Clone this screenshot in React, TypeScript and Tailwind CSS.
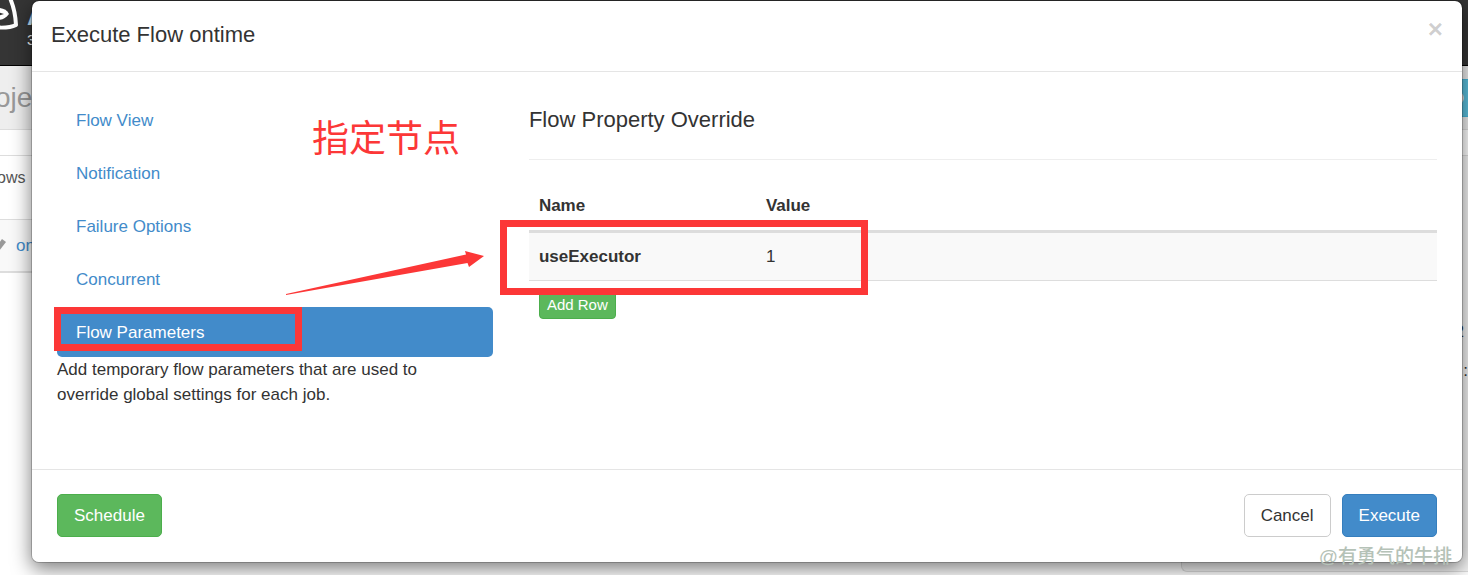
import React, { useState } from "react";

const tabs = [
  "Flow View",
  "Notification",
  "Failure Options",
  "Concurrent",
  "Flow Parameters",
];

const Logo = () => (
  <svg width="24" height="66" viewBox="0 0 24 66" fill="none" aria-hidden="true">
    <path
      d="M10 -2C13 5 15.500 14 16 25C12 27 6 28 -3 27.500"
      stroke="#fff"
      strokeWidth="4"
      strokeLinejoin="round"
    />
    <path d="M-2 8C3 8 7 10 9 14C6 18 2 20 -2 20Z" fill="#fff" />
    <path d="M-2 12L4 14L-2 16Z" fill="#333" />
  </svg>
);

const Background = () => (
  <div className="flex min-h-screen flex-col">
    <div className="flex h-[66px] border-b border-black bg-[#353535]">
      <Logo />
      <div className="pl-[3px]">
        <p className="text-[26px] leading-8 font-bold text-[#c4e2f5]">A</p>
        <p className="text-[15px] leading-4 text-white">3</p>
      </div>
    </div>
    <div className="flex h-16 items-center justify-between border-b border-[#ddd] bg-[#eee]">
      <p className="-ml-[5px] text-[28px] text-[#999]">oje</p>
      <div className="flex h-[38px] w-8 items-center justify-end border-y border-[#46b8da] bg-[#5bc0de] pr-1">
        <div className="size-3 rounded-full bg-[#ddd]" />
      </div>
    </div>
    <div className="flex flex-1 justify-between pt-[25px]">
      <div className="w-96">
        <div className="flex h-[65px] items-start border-y border-[#ddd] pt-[10px]">
          <p className="-ml-[3px] text-[16px] text-[#555]">ows</p>
        </div>
        <div className="flex h-[53px] items-center border-b-2 border-[#ddd] bg-[#f9f9f9]">
          <svg width="16" height="16" viewBox="0 0 16 16" aria-hidden="true">
            <path d="M-3 8L2 1L6 4L-1 13Z" fill="#999" />
          </svg>
          <a href="#flow" className="text-[17px] text-[#428bca]">on</a>
        </div>
      </div>
      <div className="mb-[3px] w-[287px] rounded-l-md border-y border-l border-[#ddd] bg-[#f5f5f5] pt-[163px] text-right text-[17px] leading-[25px]">
        <p className="pr-1">2</p>
        <p className="pt-[14px]">:</p>
      </div>
    </div>
  </div>
);

const Marks = () => (
  <div className="pointer-events-none absolute inset-0 z-20">
    <p className="absolute top-[114px] left-[312px] text-[37px] leading-[52px] text-[#fc3737]">
      指定节点
    </p>
    <svg
      className="absolute top-[250px] left-[286px]"
      width="200"
      height="46"
      viewBox="0 0 200 46"
      aria-hidden="true"
    >
      <path d="M0 44L180 4.500L179 1L198 6L183 17L181.500 13L0 45Z" fill="#fc3737" />
    </svg>
    <div className="absolute top-[307px] left-[54px] h-11 w-[248px] border-[7px] border-[#fc3737]" />
    <div className="absolute top-[220px] left-[500px] h-[75px] w-[368px] border-[7px] border-[#fc3737]" />
    <p className="absolute right-4 bottom-1 text-[19px] leading-7 font-medium text-[#b5c2b7]">
      @有勇气的牛排
    </p>
  </div>
);

export default function App() {
  const [active, setActive] = useState("Flow Parameters");

  return (
    <div className="relative min-h-screen overflow-hidden bg-white font-['Liberation_Sans','Noto_Sans_CJK_SC',sans-serif] text-[#333]">
      <Background />
      <div className="absolute inset-0 z-10 pr-[5px] pl-[31px]">
        <div
          role="dialog"
          aria-labelledby="title"
          className="rounded-lg border border-black/20 bg-white bg-clip-padding text-[17px] leading-[25px] shadow-[0_6px_19px_rgba(0,0,0,0.5)]"
        >
          <div className="flex h-[71px] items-start justify-between border-b border-[#e5e5e5] px-[19px] pt-4">
            <h4 id="title" className="pt-[5px] text-[22px]">
              Execute Flow ontime
            </h4>
            <button
              type="button"
              aria-label="Close"
              className="text-[26px] font-bold text-black/20"
            >
              ×
            </button>
          </div>

          <div className="grid grid-cols-[12fr_25fr] gap-9 px-[25px] pt-[23px] pb-[62px]">
            <div>
              <ul className="flex flex-col gap-[3px]">
                {tabs.map((tab) => (
                  <li key={tab}>
                    <a
                      href="#tab"
                      onClick={() => setActive(tab)}
                      className={`flex h-[50px] items-center rounded-[5px] px-[19px] ${
                        tab === active ? "bg-[#428bca] text-white" : "text-[#428bca]"
                      }`}
                    >
                      {tab}
                    </a>
                  </li>
                ))}
              </ul>
              <p className="pr-12">
                Add temporary flow parameters that are used to override global
                settings for each job.
              </p>
            </div>

            <div>
              <h4 className="border-b border-[#eee] pt-3 pb-[27px] text-[22px]">
                Flow Property Override
              </h4>
              <table className="mt-[22px] w-full table-fixed text-left">
                <thead>
                  <tr className="h-[49px] border-b-[3px] border-[#ddd]">
                    <th className="w-1/4 px-[10px]">Name</th>
                    <th className="px-[10px]">Value</th>
                  </tr>
                </thead>
                <tbody>
                  <tr className="h-[49px] border-b border-[#ddd] bg-[#f9f9f9]">
                    <td className="px-[10px] font-bold">useExecutor</td>
                    <td className="px-[10px]">1</td>
                  </tr>
                </tbody>
              </table>
              <button
                type="button"
                className="mt-[10px] ml-[10px] h-7 rounded-[4px] border border-[#4cae4c] bg-[#5cb85c] px-[7px] text-[15px] leading-5 text-white"
              >
                Add Row
              </button>
            </div>
          </div>

          <div className="flex gap-[11px] border-t border-[#e5e5e5] px-[25px] pt-6 pb-[25px]">
            <button
              type="button"
              className="mr-auto h-[43px] rounded-[5px] border border-[#4cae4c] bg-[#5cb85c] px-4 text-white"
            >
              Schedule
            </button>
            <button
              type="button"
              className="h-[43px] rounded-[5px] border border-[#ccc] bg-white px-4"
            >
              Cancel
            </button>
            <button
              type="button"
              className="h-[43px] rounded-[5px] border border-[#357ebd] bg-[#428bca] px-4 text-white"
            >
              Execute
            </button>
          </div>
        </div>
      </div>
      <Marks />
    </div>
  );
}
